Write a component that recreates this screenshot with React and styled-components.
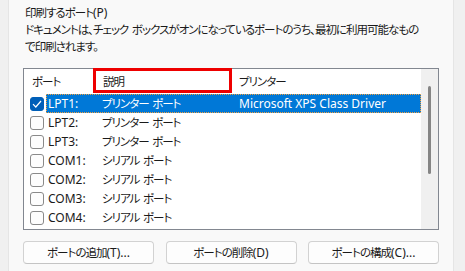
import styled, { createGlobalStyle } from "styled-components";

const GlobalStyle = createGlobalStyle`
  html, body {
    margin: 0;
    padding: 0;
    background: #f0f0f0;
  }
  body {
    font-family: "Noto Sans", "Noto Sans CJK JP", sans-serif;
    font-size: 12px;
    color: #1a1a1a;
  }
`;

const Frame = styled.div`
  width: 465px;
  height: 271px;
  display: flex;
  background: #f0f0f0;
  overflow: hidden;
`;

const Panel = styled.div`
  margin-left: 8px;
  width: 416px;
  height: 267px;
  background: #f9f9f9;
  border: 1px solid #e5e5e5;
  border-top: none;
  padding: 4px 14px 0 14px;
  display: flex;
  flex-direction: column;
`;

// Japanese runs: narrower, proportional kana like Yu Gothic UI
const Jp = styled.span`
  font-family: "Noto Sans CJK JP", sans-serif;
  font-size: 11.5px;
  font-feature-settings: "palt";
  letter-spacing: -1px;
  word-spacing: 2px;
`;

const Intro = styled.div`
  padding-left: 2px;
  line-height: 16px;
  white-space: nowrap;
`;

const ListBox = styled.div`
  margin-top: 13px;
  height: 160px;
  border: 1px solid #828790;
  background: #fff;
  display: flex;
`;

const ListMain = styled.div`
  flex: 1;
  display: flex;
  flex-direction: column;
`;

const Header = styled.div`
  position: relative;
  height: 25px;
  display: flex;
  align-items: center;
`;

const HeadCell = styled.div`
  width: ${(p) => p.$w || "auto"};
  flex: ${(p) => (p.$w ? "none" : 1)};
  padding-left: ${(p) => p.$pad}px;
  box-sizing: border-box;
  white-space: nowrap;
`;

const RedBox = styled.div`
  position: absolute;
  left: 69px;
  top: -1px;
  width: 139px;
  height: 25px;
  border: 3px solid #ee0000;
  box-sizing: border-box;
`;

const Row = styled.div`
  height: 19px;
  display: flex;
  align-items: center;
`;

const CheckCell = styled.div`
  width: 22px;
  height: 19px;
  display: flex;
  align-items: center;
  padding-left: 6px;
  box-sizing: border-box;
`;

const Box = styled.div`
  width: 14px;
  height: 14px;
  box-sizing: border-box;
  border-radius: 3px;
  border: 1px solid ${(p) => (p.$on ? "#005fb8" : "#8a8a8a")};
  background: ${(p) => (p.$on ? "#005fb8" : "#fdfdfd")};
  display: flex;
  align-items: center;
  justify-content: center;
`;

const Item = styled.div`
  flex: 1;
  height: 19px;
  display: flex;
  align-items: center;
  box-sizing: border-box;
  background: ${(p) => (p.$sel ? "#0078d7" : "transparent")};
  color: ${(p) => (p.$sel ? "#fff" : "#1a1a1a")};
  outline: ${(p) => (p.$sel ? "1px dotted #f0a040" : "none")};
  outline-offset: -1px;
`;

const Cell = styled.div`
  width: ${(p) => p.$w || "auto"};
  flex: ${(p) => (p.$w ? "none" : 1)};
  padding-left: 2px;
  box-sizing: border-box;
  white-space: nowrap;
`;

const ScrollBar = styled.div`
  width: 17px;
  background: #f0f0f0;
  display: flex;
  justify-content: center;
  padding-top: 17px;
  box-sizing: border-box;
`;

const Thumb = styled.div`
  width: 3px;
  height: 88px;
  border-radius: 2px;
  background: #858585;
`;

const Buttons = styled.div`
  margin-top: 11px;
  display: flex;
  justify-content: space-between;
`;

const Button = styled.button`
  width: 131px;
  height: 23px;
  border: 1px solid #d2d2d2;
  border-bottom-color: #c4c4c4;
  border-radius: 4px;
  background: #fdfdfd;
  font-family: "Noto Sans", "Noto Sans CJK JP", sans-serif;
  font-size: 12px;
  color: #1a1a1a;
  padding: 0;
`;

const ports = [
  { name: "LPT1:", desc: "プリンター ポート", printer: "Microsoft XPS Class Driver", on: true },
  { name: "LPT2:", desc: "プリンター ポート" },
  { name: "LPT3:", desc: "プリンター ポート" },
  { name: "COM1:", desc: "シリアル ポート" },
  { name: "COM2:", desc: "シリアル ポート" },
  { name: "COM3:", desc: "シリアル ポート" },
  { name: "COM4:", desc: "シリアル ポート" },
];

const Check = () => (
  <svg width="10" height="8" viewBox="0 0 10 8">
    <path d="M1 4.2 L3.8 7 L9 1" fill="none" stroke="#fff" strokeWidth="1.2" />
  </svg>
);

export default function App() {
  return (
    <Frame>
      <GlobalStyle />
      <Panel>
        <Intro>
          <Jp>印刷するポート</Jp>(P)
          <br />
          <Jp>ドキュメントは、チェック ボックスがオンになっているポートのうち、最初に利用可能なもの</Jp>
          <br />
          <Jp>で印刷されます。</Jp>
        </Intro>
        <ListBox>
          <ListMain>
            <Header>
              <HeadCell $w="76px" $pad={8}><Jp>ポート</Jp></HeadCell>
              <HeadCell $w="137px" $pad={3}><Jp>説明</Jp></HeadCell>
              <HeadCell $pad={2}><Jp>プリンター</Jp></HeadCell>
              <RedBox />
            </Header>
            {ports.map((p) => (
              <Row key={p.name}>
                <CheckCell>
                  <Box $on={p.on}>{p.on && <Check />}</Box>
                </CheckCell>
                <Item $sel={p.on}>
                  <Cell $w="54px">{p.name}</Cell>
                  <Cell $w="137px"><Jp>{p.desc}</Jp></Cell>
                  <Cell>{p.printer}</Cell>
                </Item>
              </Row>
            ))}
          </ListMain>
          <ScrollBar>
            <Thumb />
          </ScrollBar>
        </ListBox>
        <Buttons>
          <Button><Jp>ポートの追加</Jp>(T)...</Button>
          <Button><Jp>ポートの削除</Jp>(D)</Button>
          <Button><Jp>ポートの構成</Jp>(C)...</Button>
        </Buttons>
      </Panel>
    </Frame>
  );
}
